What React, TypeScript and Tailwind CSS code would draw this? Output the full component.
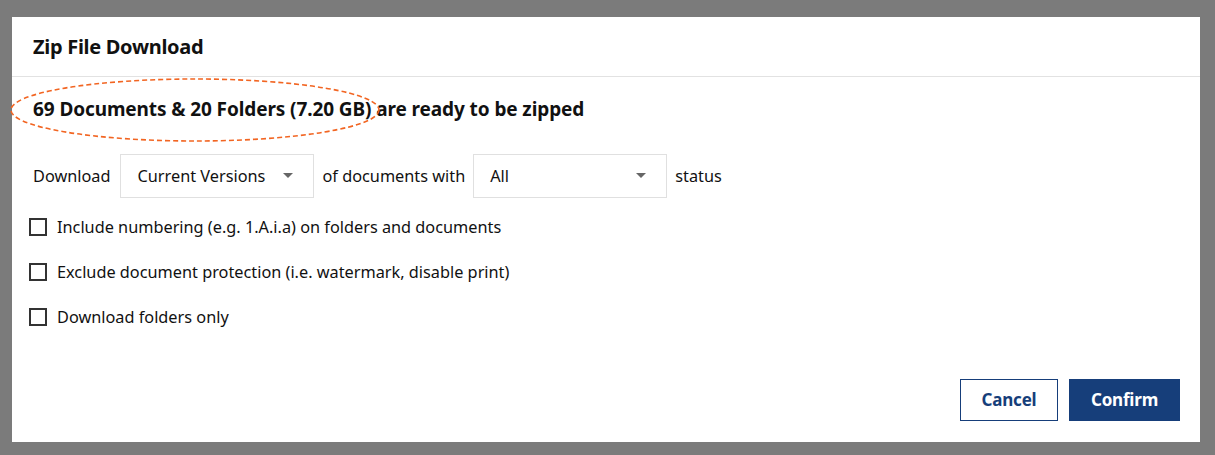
export default function App() {
  return (
    <div className="w-[1215px] h-[455px] bg-[#7b7b7b] pt-[17px] pl-[12px] font-['Noto_Sans',sans-serif] text-[#111]">
      <div className="relative w-[1188px] h-[425px] bg-white flex flex-col">
        {/* Header */}
        <div className="h-[60px] flex items-center px-[21px] border-b border-[#e2e2e2]">
          <h1 className="text-[20px] font-bold tracking-[-0.3px]">Zip File Download</h1>
        </div>

        {/* annotation ellipse */}
        <svg
          className="absolute left-[-3px] top-[60px] pointer-events-none"
          width="372"
          height="66"
          viewBox="0 0 372 66"
        >
          <ellipse
            cx="186"
            cy="33"
            rx="184"
            ry="31"
            fill="none"
            stroke="#f26522"
            strokeWidth="1.6"
            strokeDasharray="5 3"
          />
        </svg>

        <div className="flex-1 px-[21px] pt-[18px] text-[16.3px]">
          <h2 className="text-[19px] font-bold leading-[28px] tracking-[-0.1px]">
            69 Documents &amp; 20 Folders (7.20 GB) are ready to be zipped
          </h2>

          <div className="flex items-center mt-[31px]">
            <span className="mr-[10px]">Download</span>
            <div className="w-[194px] h-[44px] border border-[#e0e0e0] flex items-center justify-between pl-[16px] pr-[20px]">
              <span>Current Versions</span>
              <Caret />
            </div>
            <span className="mx-[8px]">of documents with</span>
            <div className="w-[194px] h-[44px] border border-[#e0e0e0] flex items-center justify-between pl-[16px] pr-[20px]">
              <span>All</span>
              <Caret />
            </div>
            <span className="ml-[8px]">status</span>
          </div>

          <div className="mt-[18px] flex flex-col gap-[23px]">
            <Check label="Include numbering (e.g. 1.A.i.a) on folders and documents" />
            <Check label="Exclude document protection (i.e. watermark, disable print)" />
            <Check label="Download folders only" />
          </div>
        </div>

        <div className="flex justify-end gap-[11px] pr-[20px] pb-[21px]">
          <button className="w-[98px] h-[42px] border border-[#163e7a] text-[#163e7a] text-[17px] font-bold bg-white tracking-[-0.2px]">
            Cancel
          </button>
          <button className="w-[111px] h-[42px] bg-[#163e7a] text-white text-[17px] font-bold tracking-[-0.2px]">
            Confirm
          </button>
        </div>
      </div>
    </div>
  );
}

function Caret() {
  return (
    <svg width="10" height="6" viewBox="0 0 10 6">
      <path d="M0 0 L10 0 L5 5 Z" fill="#666" />
    </svg>
  );
}

function Check({ label }: { label: string }) {
  return (
    <label className="flex items-center leading-[22px]">
      <span className="w-[18px] h-[18px] border-2 border-[#333] mr-[10px] ml-[-4px] shrink-0" />
      <span>{label}</span>
    </label>
  );
}
